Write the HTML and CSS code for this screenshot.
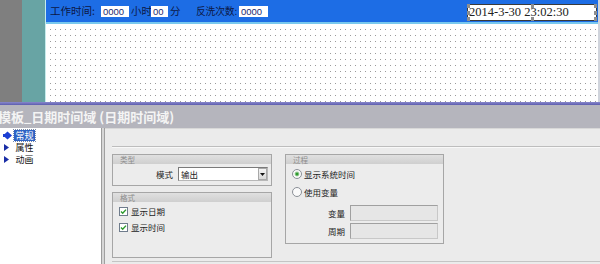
FILE: index.html
```html
<!DOCTYPE html>
<html lang="zh">
<head>
<meta charset="utf-8">
<title>模板_日期时间域</title>
<link rel="stylesheet" href="styles.css">
</head>
<body>
<div class="top">
  <div class="col-gray"></div>
  <div class="col-teal"></div>
  <div class="canvas">
    <div class="bar">
      <span class="lbl w-l1">工作时间:</span><span class="fld w-f1">0000</span><span class="lbl w-l2">小时</span><span class="fld w-f2">00</span><span class="lbl w-l3">分</span><span class="lbl w-l4">反洗次数:</span><span class="fld w-f3">0000</span>
      <div class="date">2014-3-30 23:02:30
        <i class="h h-tl"></i><i class="h h-tm"></i><i class="h h-tr"></i><i class="h h-mr"></i><i class="h h-ml"></i><i class="h h-bl"></i><i class="h h-bm"></i><i class="h h-br"></i>
      </div>
    </div>
    <div class="dots"></div>
  </div>
</div>
<div class="sep"></div>
<div class="title">模板_日期时间域 (日期时间域)</div>
<div class="main">
  <ul class="tree">
    <li><svg class="ti" width="9" height="9" viewBox="0 0 9 9"><polygon points="0,4.5 4.5,0.5 9,4.5 4.5,8.5" fill="#1b3fd4"/><rect x="0" y="3" width="4" height="3" fill="#1b3fd4"/></svg><span class="sel">常规</span></li>
    <li><svg class="ti" width="9" height="9" viewBox="0 0 9 9"><polygon points="1,1 6,4.5 1,8" fill="#1a2ea6"/></svg><span>属性</span></li>
    <li><svg class="ti" width="9" height="9" viewBox="0 0 9 9"><polygon points="1,1 6,4.5 1,8" fill="#1a2ea6"/></svg><span>动画</span></li>
  </ul>
  <div class="props">
    <div class="props-top"></div>
    <div class="page">
      <div class="col1">
        <div class="group g-type">
          <div class="ghead">类型</div>
          <div class="gbody row-end">
            <span class="txt">模式</span>
            <div class="select"><span class="sel-txt">输出</span><span class="sel-btn"><svg width="5" height="3" viewBox="0 0 5 3"><polygon points="0,0 5,0 2.5,3" fill="#111"/></svg></span></div>
          </div>
        </div>
        <div class="group g-format">
          <div class="ghead">格式</div>
          <div class="gbody pad1">
            <div class="opt"><svg class="cb" width="9" height="9" viewBox="0 0 9 9"><rect x="0.5" y="0.5" width="8" height="8" fill="#fff" stroke="#6f7c8c"/><path d="M2 4.6 L3.7 6.3 L7 2.6" fill="none" stroke="#2c9a2c" stroke-width="1.4"/></svg><span class="txt">显示日期</span></div>
            <div class="opt"><svg class="cb" width="9" height="9" viewBox="0 0 9 9"><rect x="0.5" y="0.5" width="8" height="8" fill="#fff" stroke="#6f7c8c"/><path d="M2 4.6 L3.7 6.3 L7 2.6" fill="none" stroke="#2c9a2c" stroke-width="1.4"/></svg><span class="txt">显示时间</span></div>
          </div>
        </div>
      </div>
      <div class="col2">
        <div class="group g-proc">
          <div class="ghead">过程</div>
          <div class="gbody pad1">
            <div class="opt opt-r"><svg class="rb" width="10" height="10" viewBox="0 0 10 10"><circle cx="5" cy="5" r="4.5" fill="#fafafa" stroke="#8a8f96"/><circle cx="5" cy="5" r="2.4" fill="#9ed09e"/><circle cx="5" cy="5" r="1.5" fill="#2f9a2f"/></svg><span class="txt">显示系统时间</span></div>
            <div class="opt opt-r"><svg class="rb" width="10" height="10" viewBox="0 0 10 10"><circle cx="5" cy="5" r="4.5" fill="#fafafa" stroke="#8a8f96"/></svg><span class="txt">使用变量</span></div>
            <div class="frow first"><span class="txt">变量</span><div class="field"></div></div>
            <div class="frow"><span class="txt">周期</span><div class="field"></div></div>
          </div>
        </div>
      </div>
    </div>
  </div>
</div>
</body>
</html>
```

FILE: styles.css
```css
* { box-sizing: border-box; }
html, body { margin: 0; padding: 0; }
body {
  width: 600px;
  height: 264px;
  overflow: hidden;
  font-family: "Noto Sans CJK SC", "Liberation Sans", sans-serif;
  background: #ebebeb;
}

.top { display: flex; height: 102px; }
.col-gray { width: 22px; background: #7f7f7f; }
.col-teal { width: 24px; background: #68a4a4; border-right: 1px solid #c6ecec; }
.canvas { flex: 1; display: flex; flex-direction: column; background: #fff; border-right: 2px solid #d0d4dc; }
.bar {
  height: 24px;
  background: #1d6de5;
  border-bottom: 2px solid #78c8ee;
  display: flex;
  align-items: center;
  padding-left: 4px;
}
.lbl {
  flex-shrink: 0;
  font-size: 10.5px;
  line-height: 22px;
  color: #0c1846;
  white-space: nowrap;
}
.fld {
  flex-shrink: 0;
  height: 11px;
  background: #fff;
  font-family: "Liberation Sans", sans-serif;
  font-size: 9.5px;
  line-height: 11px;
  color: #1a2970;
  padding-left: 2px;
}
.w-l1 { width: 51px; }
.w-f1 { width: 28px; }
.w-l2 { width: 22px; padding-left: 2px; }
.w-f2 { width: 17px; }
.w-l3 { width: 11px; margin-left: 2px; }
.w-l4 { width: 43px; margin-left: 15px; font-size: 9.8px; letter-spacing: -0.2px; }
.w-f3 { width: 29px; }

.date {
  position: relative;
  margin-left: auto;
  margin-right: 1px;
  align-self: flex-start;
  margin-top: 4px;
  width: 130px;
  height: 17px;
  background: #fff;
  border: 1px solid #3a3a3a;
  font-family: "Liberation Serif", serif;
  font-size: 12.5px;
  line-height: 15px;
  color: #222;
  padding-left: 1px;
  white-space: nowrap;
}
.h { position: absolute; width: 3px; height: 4px; background: #8e8e8e; }
.h-tl { left: -1px; top: -1px; }
.h-tm { left: 63px; top: -1px; }
.h-tr { right: -1px; top: -1px; }
.h-mr { right: -1px; top: 6px; }
.h-ml { left: -1px; top: 6px; }
.h-bl { left: -1px; bottom: -1px; }
.h-bm { left: 63px; bottom: -1px; }
.h-br { right: -1px; bottom: -1px; }

.dots {
  flex: 1;
  background-color: #fff;
  background-image:
    linear-gradient(90deg, #fff 4px, transparent 4px),
    linear-gradient(#fff 5px, #9a9a9a 5px);
  background-size: 5px 6px, 5px 6px;
  background-position: 0 0, 0 0;
}

.sep { height: 3px; background: linear-gradient(#8888cc, #5c5cae); }

.title {
  height: 23px;
  background: #b5b5bd;
  color: #f4f4f4;
  font-weight: bold;
  font-size: 13px;
  line-height: 23px;
  text-indent: -2px;
  white-space: nowrap;
  overflow: hidden;
}

.main { display: flex; height: 136px; background: #d6d6d6; }
.tree {
  width: 102px;
  margin: 0;
  padding: 1px 0 0 0;
  list-style: none;
  background: #fff;
  border-right: 1px solid #9c9c9c;
}
.tree li {
  height: 12px;
  display: flex;
  align-items: center;
  padding-left: 3px;
  font-size: 9px;
  line-height: 11px;
  color: #111;
}
.ti { flex-shrink: 0; }
.tree li span { margin-left: 2px; padding: 0 1.5px; }
.tree li .sel { background: #2e63c4; color: #fff; outline: 1px dotted #7a8aa8; }

.props {
  margin-left: 2px;
  flex: 1;
  border-left: 1px solid #a0a0a0;
  background: #ebebeb;
  display: flex;
  flex-direction: column;
}
.props-top { height: 18px; border-top: 1px solid #d8d8d8; background: #ebebeb; }
.page {
  margin-left: 7px;
  height: 116px;
  border-top: 1px solid #bdbdbd;
  border-bottom: 1px solid #c4c4c4;
  box-shadow: inset 0 1px 0 #f8f8f8;
  padding-top: 7px;
  display: flex;
  align-items: flex-start;
}
.col1 { width: 160px; display: flex; flex-direction: column; gap: 6px; }
.col2 { width: 159px; margin-left: 13px; }

.group { border: 1px solid #a6a6a6; background: #ececec; }
.ghead {
  height: 9px;
  background: linear-gradient(#e0e0e0, #cfcfcf);
  font-size: 7.5px;
  line-height: 9px;
  color: #8c8c8c;
  padding-left: 7px;
  white-space: nowrap;
}
.g-type { height: 32px; }
.g-format { height: 66px; }
.g-proc { height: 90px; }

.txt { font-size: 8.5px; line-height: 12px; color: #1c1c1c; white-space: nowrap; }

.row-end {
  display: flex;
  justify-content: flex-end;
  align-items: center;
  gap: 5px;
  padding: 3px 3px 0 0;
}
.select {
  width: 90px;
  height: 14px;
  background: #fff;
  border: 1px solid #7a7a7a;
  border-right-color: #b8b8b8;
  border-bottom-color: #b8b8b8;
  display: flex;
  align-items: center;
  justify-content: space-between;
}
.sel-txt { font-size: 8.5px; line-height: 12px; color: #1c1c1c; padding-left: 2px; }
.sel-btn {
  width: 9px;
  height: 12px;
  background: linear-gradient(#f4f4f4, #d8d8d8);
  border: 1px solid #a8a8a8;
  display: flex;
  align-items: center;
  justify-content: center;
}

.pad1 { padding-top: 1px; }
.opt { height: 16px; display: flex; align-items: center; gap: 3px; padding-left: 6px; }
.opt-r { height: 18px; gap: 2px; }
.cb, .rb { flex-shrink: 0; }

.frow {
  display: flex;
  justify-content: flex-end;
  align-items: center;
  gap: 5px;
  padding-right: 5px;
  margin-top: 2px;
}
.frow.first { margin-top: 4px; }
.field {
  width: 88px;
  height: 16px;
  background: #e6e6e6;
  border: 1px solid #a0a0a0;
  border-right-color: #c8c8c8;
  border-bottom-color: #c8c8c8;
}
```
